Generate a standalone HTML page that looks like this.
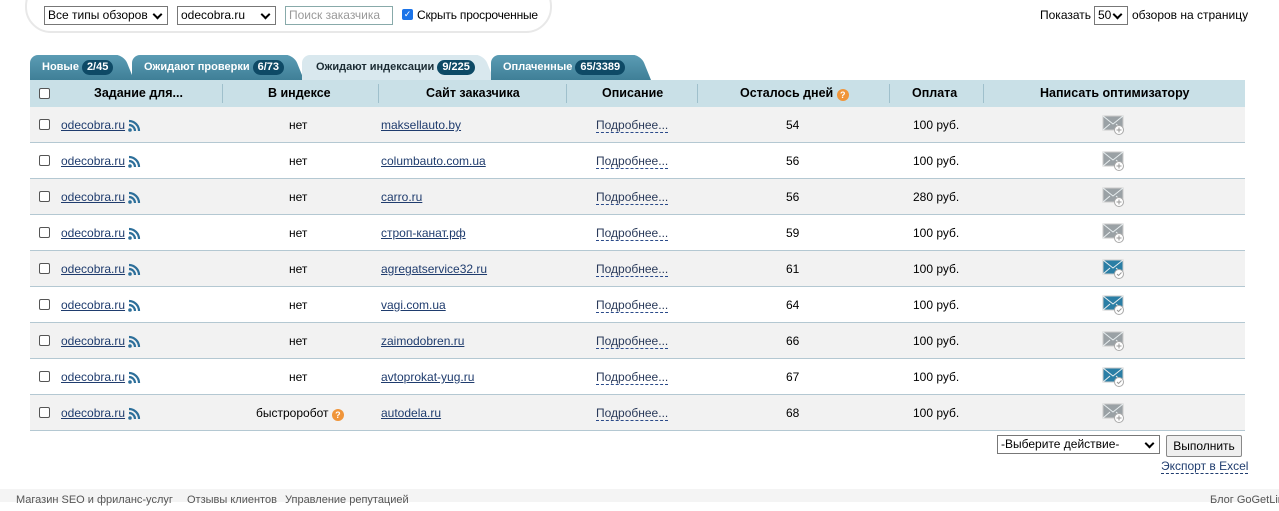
<!DOCTYPE html>
<html><head><meta charset="utf-8">
<style>
*{box-sizing:border-box;margin:0;padding:0}
body{width:1279px;height:502px;overflow:hidden;background:#fff;font-family:"Liberation Sans","DejaVu Sans",sans-serif;font-size:12px;color:#000;position:relative}
.abs{position:absolute}
.filter{left:25px;top:-20px;width:527px;height:53px;border:2px solid #e8e8e8;border-radius:26px;background:#fff}
.sel{border:1px solid #777;height:19px;background:#fff;font-size:12px;line-height:17px;padding-left:3px}
.sel:after{content:"";position:absolute;right:6px;top:4px;width:5px;height:5px;border-right:2px solid #000;border-bottom:2px solid #000;transform:rotate(45deg)}
.tab{top:55px;height:25px;color:#fff;font-weight:bold;font-size:11px;line-height:25px;border-radius:8px 8px 0 0;background:linear-gradient(#5b9cb4,#3f7f97);padding-left:12px;white-space:nowrap}
.tab:after{content:"";position:absolute;right:-10px;top:0;width:14px;height:25px;background:inherit;transform:skewX(22deg);transform-origin:0 100%;border-radius:0 8px 0 0;z-index:-1}
.tab.act{background:#d9e8ee;color:#1b2b33}
.badge{display:inline-block;background:#0e4a66;color:#fff;border-radius:9px;padding:0 5px;line-height:15px;font-size:11px;margin-left:3px}
.hdr{left:30px;top:80px;width:1215px;height:27px;background:#c9e0e7;font-weight:bold;font-size:12.5px}
.row{left:30px;width:1215px;height:36px;border-bottom:1px solid #b4c8d2}
.cb{width:11px;height:11px;border:1px solid #555;border-radius:2px;background:#fff}
a{color:#1f3c6e;text-decoration:underline}
.c{position:absolute;top:11px;white-space:nowrap}
.dot{color:#2a3a5a;border-bottom:1px dashed #2a4a8a;text-decoration:none}
.q{display:inline-block;width:12px;height:12px;border-radius:50%;background:#f0953a;color:#fff;font-size:9px;line-height:12px;text-align:center;font-weight:bold;vertical-align:-1px}
</style></head><body>
<div class="abs filter"></div>
<div class="abs sel" style="left:44px;top:6px;width:124px">Все типы обзоров</div>
<div class="abs sel" style="left:177px;top:6px;width:99px">odecobra.ru</div>
<div class="abs" style="left:285px;top:6px;width:108px;height:19px;border:1px solid #8aa;color:#999;padding-left:3px;line-height:17px">Поиск заказчика</div>
<div class="abs" style="left:402px;top:9px;width:11px;height:11px;background:#1a73e8;border-radius:2px;color:#fff;font-size:9px;line-height:11px;text-align:center">✓</div>
<div class="abs" style="left:417px;top:8px;letter-spacing:-0.2px">Скрыть просроченные</div>
<div class="abs" style="left:1040px;top:8px">Показать</div>
<div class="abs sel" style="left:1094px;top:6px;width:34px">50</div>
<div class="abs" style="left:1132px;top:8px">обзоров на страницу</div>

<div class="abs tab" style="left:30px;width:94px;z-index:1">Новые<span class="badge">2/45</span></div>
<div class="abs tab" style="left:132px;width:162px;z-index:1">Ожидают проверки<span class="badge">6/73</span></div>
<div class="abs tab act" style="left:302px;width:182px;padding-left:14px;z-index:1">Ожидают индексации<span class="badge">9/225</span></div>
<div class="abs tab" style="left:491px;width:150px;z-index:1">Оплаченные<span class="badge">65/3389</span></div>

<div class="abs hdr" style="z-index:2">
<div class="cb abs" style="left:9px;top:8px"></div>
<div class="c" style="left:64px;top:6px">Задание для...</div>
<div class="c" style="left:238px;top:6px">В индексе</div>
<div class="c" style="left:396px;top:6px">Сайт заказчика</div>
<div class="c" style="left:572px;top:6px">Описание</div>
<div class="c" style="left:710px;top:6px">Осталось дней <span class="q">?</span></div>
<div class="c" style="left:882px;top:6px">Оплата</div>
<div class="c" style="left:1010px;top:6px">Написать оптимизатору</div>
<div class="abs" style="left:192px;top:4px;width:1px;height:19px;background:#9fc0cc"></div>
<div class="abs" style="left:348px;top:4px;width:1px;height:19px;background:#9fc0cc"></div>
<div class="abs" style="left:536px;top:4px;width:1px;height:19px;background:#9fc0cc"></div>
<div class="abs" style="left:667px;top:4px;width:1px;height:19px;background:#9fc0cc"></div>
<div class="abs" style="left:859px;top:4px;width:1px;height:19px;background:#9fc0cc"></div>
<div class="abs" style="left:953px;top:4px;width:1px;height:19px;background:#9fc0cc"></div>
</div>

<div id="rows"></div>
<script>
var d=[["нет","maksellauto.by",54,100,0],["нет","columbauto.com.ua",56,100,0],["нет","carro.ru",56,280,0],["нет","строп-канат.рф",59,100,0],["нет","agregatservice32.ru",61,100,1],["нет","vagi.com.ua",64,100,1],["нет","zaimodobren.ru",66,100,0],["нет","avtoprokat-yug.ru",67,100,1],["быстроробот","autodela.ru",68,100,0]];
var h="";
for(var i=0;i<d.length;i++){var r=d[i],t=107+i*36,bg=i%2?"#fff":"#f2f2f2";
var ec=r[4]?"#2a7ea5":"#9aa1a5";
var idx=r[0]=="нет"?'<div class="c" style="left:259px">нет</div>':'<div class="c" style="left:226px">быстроробот <span class="q">?</span></div>';
h+='<div class="abs row" style="top:'+t+'px;background:'+bg+'">'+
'<div class="cb abs" style="left:9px;top:12px"></div>'+
'<div class="c" style="left:31px"><a>odecobra.ru</a></div>'+
'<svg class="abs" style="left:98px;top:12px" width="13" height="13" viewBox="0 0 13 13"><circle cx="2" cy="11" r="1.8" fill="#2d6f9a"/><path d="M1 6a6 6 0 0 1 6 6M1 2a10 10 0 0 1 10 10" stroke="#2d6f9a" stroke-width="2.2" fill="none"/></svg>'+
idx+
'<div class="c" style="left:351px"><a>'+r[1]+'</a></div>'+
'<div class="c" style="left:566px"><span class="dot">Подробнее...</span></div>'+
'<div class="c" style="left:756px">'+r[2]+'</div>'+
'<div class="c" style="left:883px">'+r[3]+' руб.</div>'+
'<svg class="abs" style="left:1072px;top:8px" width="24" height="20" viewBox="0 0 24 20"><rect x="1" y="1" width="20" height="14" fill="'+ec+'" stroke="#c9c9c9"/><path d="M1 1l10 8 10-8M1 15l7-6M21 15l-7-6" stroke="#e8eef0" stroke-width="1" fill="none"/><circle cx="17" cy="15" r="4.5" fill="#fff" stroke="#aaa"/><path d="'+(r[4]?"M15 15l1.5 1.5 3-3":"M17 12.5v5M14.5 15h5")+'" stroke="#999" fill="none"/></svg>'+
'</div>';}
document.getElementById("rows").innerHTML=h;
</script>
<div class="abs" style="left:30px;top:106px;width:1215px;height:1px;background:#bdcdd6"></div>

<div class="abs sel" style="left:997px;top:435px;width:163px;height:19px">-Выберите действие-</div>
<div class="abs" style="left:1166px;top:435px;width:76px;height:22px;border:1px solid #888;border-radius:2px;background:#efefef;text-align:center;line-height:20px">Выполнить</div>
<div class="abs" style="left:1161px;top:460px;color:#1f3c6e;border-bottom:1px dashed #1f3c6e;line-height:13px">Экспорт в Excel</div>

<div class="abs" style="left:0;top:489px;width:1279px;height:13px;background:#f4f4f4;font-size:11px;color:#555;line-height:22px;white-space:nowrap">
<span class="abs" style="left:16px">Магазин SEO и фриланс-услуг</span>
<span class="abs" style="left:187px">Отзывы клиентов</span>
<span class="abs" style="left:285px">Управление репутацией</span>
<span class="abs" style="left:1210px">Блог GoGetLinks</span>
</div>
</body></html>
